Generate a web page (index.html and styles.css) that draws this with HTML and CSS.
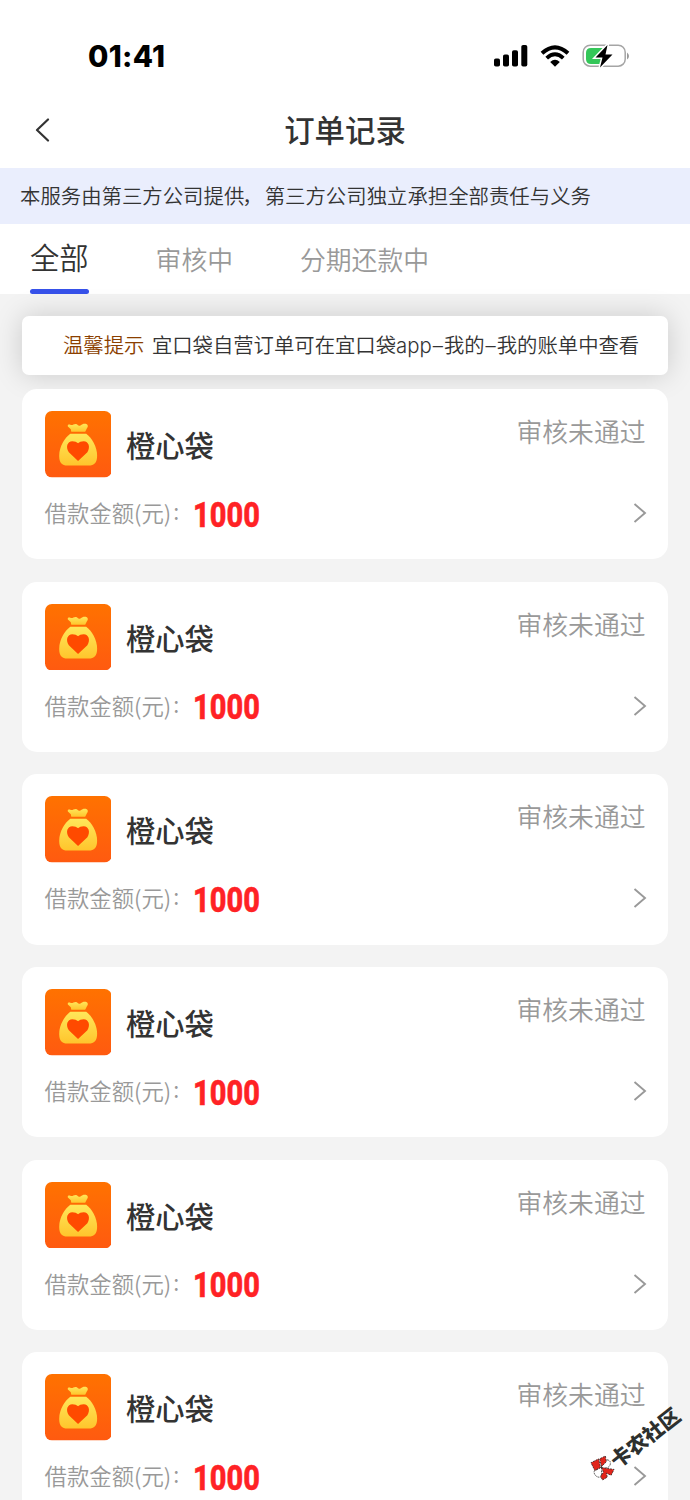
FILE: index.html
```html
<!DOCTYPE html>
<html lang="zh-CN">
<head>
<meta charset="utf-8">
<title>订单记录</title>
<link rel="stylesheet" href="styles.css">
</head>
<body>
<svg class="defs" width="0" height="0">
  <defs>
    <linearGradient id="tile" x1="0" y1="0" x2="0" y2="1"><stop offset="0" stop-color="#ff7200"/><stop offset="1" stop-color="#ff5a10"/></linearGradient>
    <linearGradient id="gold" x1="0" y1="0" x2="0" y2="1"><stop offset="0" stop-color="#ffe75a"/><stop offset="1" stop-color="#ffc52c"/></linearGradient>
  </defs>
  <symbol id="bag" viewBox="0 0 67 67">
    <rect width="67" height="67" rx="7" fill="url(#tile)"/>
    <path fill="url(#gold)" d="M26 18.500L23 15.500C22.500 13.800 24 13.300 26 14C28 14.600 28.500 13 31 13C33 13 33 14.800 34.500 14.800C36.500 14.800 37 12.800 40 12.800C43.500 12.800 44 15.500 42 17.800L40.500 21H26.500Z"/>
    <path fill="url(#gold)" d="M25.500 23H41.500C47 27 52.500 36 52.500 45C52.500 52 49.500 55 44 55H22.500C17 55 14.300 52 14.300 45C14.300 36 20 27 25.500 23Z"/>
    <path fill="#ff4a00" d="M33.300 50.500L24 41.500C20.500 36.500 22.500 30.500 27.500 30.500C30 30.500 32 31.500 33.300 32.500C34.500 31.500 36.500 30.500 39 30.500C44 30.500 46 36.500 42.700 41.500Z"/>
  </symbol>
  <symbol id="next" viewBox="0 0 14 20"><path d="M1.500 1L12 10L1.500 19" fill="none" stroke="#999" stroke-width="1.900"/></symbol>
</svg>
<div class="screen">
  <header class="status">
    <span class="time">01:41</span>
    <div class="indicators">
      <svg width="34" height="22" viewBox="0 0 34 22"><rect y="13.500" width="6" height="8" rx="1.800"/><rect x="9" y="9.500" width="6" height="12" rx="1.800"/><rect x="18" y="5.300" width="6" height="16.200" rx="1.800"/><rect x="27.300" y="0" width="6" height="21.500" rx="1.800"/></svg>
      <svg width="30" height="22" viewBox="0 0 30 22"><path d="M2 8.300Q15-3.500 28 8.300" fill="none" stroke="#000" stroke-width="4"/><path d="M6.700 13.100Q15 5.500 23.300 13.100" fill="none" stroke="#000" stroke-width="3.900"/><path d="M10.200 17Q15 12.500 19.800 17L15 21.700Z"/></svg>
      <svg width="48" height="24" viewBox="0 0 48 24"><rect x="1.200" y="1.200" width="42" height="21" rx="7" fill="none" stroke="#a5a5a5" stroke-width="1.500"/><path d="M9 4H21V20H9Q4 20 4 15V9Q4 4 9 4Z" fill="#34c759"/><path d="M45 8.500Q47 10 47 12T45 15.500Z" fill="#999"/><path d="M25.500 1L13.500 13.500H20.500L18 23.500L30.500 10.500H23.500Z" stroke="#fff" stroke-width="3" paint-order="stroke"/></svg>
    </div>
  </header>
  <nav class="navbar">
    <svg class="back" width="15" height="24" viewBox="0 0 15 24"><path d="M13 1.500L2 12L13 22.500" fill="none" stroke="#333" stroke-width="2.200" stroke-linecap="round" stroke-linejoin="round"/></svg>
    <h1 class="title">订单记录</h1>
  </nav>
  <p class="notice">本服务由第三方公司提供<span class="comma">，</span>第三方公司独立承担全部责任与义务</p>
  <div class="tabs"><span class="tab active">全部</span><span class="tab">审核中</span><span class="tab">分期还款中</span></div>
  <main class="content">
    <p class="tip"><span class="tip-label">温馨提示</span><span>宜口袋自营订单可在宜口袋<span class="latin">app<span class="dash">–</span></span>我的<span class="latin dash">–</span>我的账单中查看</span></p>
    <article class="card"><div class="top"><svg class="logo"><use href="#bag"/></svg><h2 class="name">橙心袋</h2><span class="state">审核未通过</span></div><div class="bottom"><span class="label">借款金额(元)<span class="colon">:</span></span><strong class="amount">1000</strong><svg class="next"><use href="#next"/></svg></div></article>
    <article class="card"><div class="top"><svg class="logo"><use href="#bag"/></svg><h2 class="name">橙心袋</h2><span class="state">审核未通过</span></div><div class="bottom"><span class="label">借款金额(元)<span class="colon">:</span></span><strong class="amount">1000</strong><svg class="next"><use href="#next"/></svg></div></article>
    <article class="card"><div class="top"><svg class="logo"><use href="#bag"/></svg><h2 class="name">橙心袋</h2><span class="state">审核未通过</span></div><div class="bottom"><span class="label">借款金额(元)<span class="colon">:</span></span><strong class="amount">1000</strong><svg class="next"><use href="#next"/></svg></div></article>
    <article class="card"><div class="top"><svg class="logo"><use href="#bag"/></svg><h2 class="name">橙心袋</h2><span class="state">审核未通过</span></div><div class="bottom"><span class="label">借款金额(元)<span class="colon">:</span></span><strong class="amount">1000</strong><svg class="next"><use href="#next"/></svg></div></article>
    <article class="card"><div class="top"><svg class="logo"><use href="#bag"/></svg><h2 class="name">橙心袋</h2><span class="state">审核未通过</span></div><div class="bottom"><span class="label">借款金额(元)<span class="colon">:</span></span><strong class="amount">1000</strong><svg class="next"><use href="#next"/></svg></div></article>
    <article class="card"><div class="top"><svg class="logo"><use href="#bag"/></svg><h2 class="name">橙心袋</h2><span class="state">审核未通过</span></div><div class="bottom"><span class="label">借款金额(元)<span class="colon">:</span></span><strong class="amount">1000</strong><svg class="next"><use href="#next"/></svg></div></article>
  </main>
  <div class="watermark">
    <svg class="mark" viewBox="0 0 26 27"><g stroke="#222" stroke-width=".8" stroke-dasharray="2 1"><path d="M12 12L17 5Q22 5 21 10Q20 14 12 14Z" fill="#fff"/><path d="M12 13L12 23Q5 24 4 17L11 13Z" fill="#fff"/><path d="M11 13L5 16L1 8L9 4Z" fill="#e1251b"/><path d="M12 12L10 4L16 1L17 7Z" fill="#e1251b"/><path d="M12 13L25 15L22 21L17 19L18 23L13 26L11 22L14 18Z" fill="#e1251b"/></g></svg>
    <span class="mark-text">卡农社区</span>
  </div>
</div>
</body>
</html>
```
FILE: styles.css
```css
* { box-sizing: border-box; margin: 0; padding: 0; }
body { background: #f3f3f3; color: #333; font-family: "Noto Sans CJK SC", sans-serif; font-weight: 350; }
.defs { position: absolute; }
.screen { position: relative; width: 690px; height: 1500px; overflow: hidden; }
.status { height: 94px; padding: 18px 60px 0 88px; display: flex; align-items: center; justify-content: space-between; background: #fff; }
.time { font: 800 29.500px/36px Inter, sans-serif; color: #000; letter-spacing: .3px; }
.indicators { display: flex; align-items: center; gap: 12px; }
.navbar { height: 74px; display: grid; grid-template-columns: 50px 1fr 50px; align-items: center; background: #fff; }
.back { justify-self: end; margin-bottom: 2px; }
.title { text-align: center; font-size: 30.400px; line-height: 44px; font-weight: 500; padding-bottom: 4px; }
.notice { height: 56px; padding-left: 20px; background: #eaeefd; font-size: 20.400px; line-height: 54px; white-space: nowrap; }
.comma { margin-left: -2px; margin-right: 2px; }
.tabs { height: 70px; display: flex; align-items: flex-start; gap: 67px; padding-left: 30px; background: #fff; white-space: nowrap; }
.tab { height: 70px; font-size: 25.800px; line-height: 70px; color: #999; }
.tab.active { display: flex; flex-direction: column; justify-content: space-between; font-size: 29.300px; line-height: 65px; color: #333; }
.tab.active::after { content: ""; height: 5px; border-radius: 3px; background: #3752ea; }
.content { padding: 22.400px 22px 0; display: flex; flex-direction: column; gap: 22.300px; }
.tip { height: 59px; margin-bottom: -8.600px; padding-left: 41px; display: flex; gap: 7.500px; background: #fff; border-radius: 7px; box-shadow: 0 0 28px rgba(0, 0, 0, .17); font-size: 20.350px; line-height: 56px; white-space: nowrap; }
.tip-label { color: #8b3f00; }
.latin { font-family: Inter, sans-serif; }
.dash { margin: 0 1px; }
.card { flex: none; height: 170.350px; padding: 22px 22.500px; background: #fff; border-radius: 15px; }
.top { display: flex; height: 67px; }
.logo { width: 66.500px; height: 66.500px; flex: none; }
.name { margin-left: 15px; font-size: 29.300px; line-height: 66px; font-weight: 500; }
.state { margin-left: auto; font-size: 25.800px; line-height: 39px; color: #999; }
.bottom { display: flex; align-items: center; height: 70px; }
.label { width: 148px; font-size: 22.400px; line-height: 32px; padding-bottom: 2px; color: #999; white-space: nowrap; }
.colon { margin-left: 2px; vertical-align: 2px; line-height: 1; }
.amount { font: 800 34.500px/40px Roboto, sans-serif; margin-top: 3px; color: #ff2225; -webkit-text-stroke: .5px #ff2225; transform: scaleX(.84); transform-origin: left; }
.next { width: 14px; height: 20px; margin-left: auto; margin-right: -1px; }
.watermark { position: absolute; left: 590px; top: 1407px; width: 94px; height: 76px; display: flex; align-items: flex-end; }
.mark { width: 25px; height: 26px; flex: none; margin-bottom: 2px; }
.mark-text { margin: 0 0 9px -3px; transform: rotate(-38deg); transform-origin: 0 50%; font-size: 20.500px; line-height: 24px; font-weight: 900; color: #2d302e; white-space: nowrap; }
```
